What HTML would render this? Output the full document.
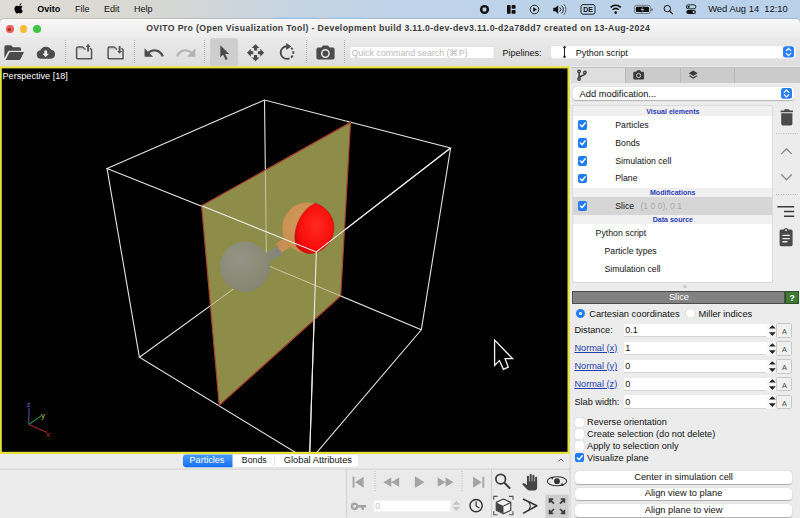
<!DOCTYPE html>
<html><head><meta charset="utf-8">
<style>
*{box-sizing:border-box;margin:0;padding:0}
html,body{width:800px;height:518px;overflow:hidden;background:#ececec;font-family:"Liberation Sans",sans-serif;font-size:9px;color:#111}
.abs{position:absolute}
#menubar{left:0;top:0;width:800px;height:26px;background:linear-gradient(to right,#dcdcd4 0%,#dad9d3 14%,#d3d6d6 24%,#c7d4e1 35%,#bed3e8 50%,#bad1ec 100%)}
#menubar span{position:absolute;top:3px;font-size:9.5px;color:#111}
#titlebar{left:0;top:18.8px;width:799.5px;height:18.6px;background:linear-gradient(#f8f8f8,#ededed);border-radius:4.5px 4.5px 0 0;box-shadow:0 -.7px 0 rgba(0,0,0,.16)}
#title{left:146.2px;top:22.9px;font-size:8.7px;font-weight:bold;color:#3a3a3a;white-space:nowrap;letter-spacing:0.37px}
.tl{position:absolute;top:25.2px;width:7.6px;height:7.6px;border-radius:50%}
#toolbar{left:0;top:37.3px;width:799.5px;height:29px;background:linear-gradient(#ebebeb,#dedede)}
.sep{position:absolute;top:40px;width:0;height:24px;border-left:1px dotted #b5b5b5}
#viewport{left:0;top:66px;width:571px;height:387px;background:#000;border:2px solid #e6e23c}
#vplabel{left:3px;top:70px;color:#fff;font-size:9px}
#right{left:571px;top:66px;width:229px;height:452px;background:#ececec}
#bottom{left:0;top:454.2px;width:571px;height:64px;background:#ececec}
.cb{position:absolute;width:9.5px;height:9.5px;border-radius:2px;background:#1f7cf6}
.cb svg{position:absolute;left:0;top:0}
.ucb{position:absolute;width:9.5px;height:9.5px;border-radius:2.2px;background:#fff;box-shadow:0 0 .8px rgba(0,0,0,.35)}
.t{position:absolute;white-space:nowrap}
.inp{position:absolute;left:622px;width:144px;height:13px;background:#fff;border-bottom:1px solid #d0d0d0;font-size:9px;padding:2px 0 0 3px}
.abtn{position:absolute;left:779px;width:13px;height:13px;background:#fff;border:0.5px solid #d0d0d0;border-radius:2px;font-size:7px;text-align:center;line-height:13px;color:#333}
.btn{position:absolute;left:575px;width:217px;height:13px;background:#fff;border-radius:3px;box-shadow:0 0.5px 1px rgba(0,0,0,.3);text-align:center;font-size:9px;line-height:13px}
.lnk{color:#1a3fb0;text-decoration:underline}
</style></head><body>
<div id="menubar" class="abs"></div>
<div id="titlebar" class="abs"></div>
<div id="toolbar" class="abs"></div>
<svg class="abs" style="left:0;top:0" width="800" height="19" viewBox="0 0 800 19">
<rect x="275" y="17.6" width="42" height="1" fill="#8fc0f0"/><rect x="328" y="17.6" width="36" height="1" fill="#9ac6f0"/>
<!-- apple -->
<g fill="#000">
<path d="M18.6 6.1 c-.9 -.05 -1.7 .5 -2.1 .5 c-.45 0 -1.1 -.48 -1.85 -.46 c-.95 .01 -1.8 .55 -2.3 1.4 c-1 1.7 -.25 4.2 .7 5.6 c.47 .68 1.03 1.44 1.76 1.41 c.7 -.03 .97 -.45 1.82 -.45 c.85 0 1.09 .45 1.84 .44 c.76 -.02 1.24 -.69 1.7 -1.37 c.54 -.78 .76 -1.54 .77 -1.58 c-.02 -.01 -1.47 -.56 -1.49 -2.24 c-.01 -1.4 1.15 -2.07 1.2 -2.1 c-.66 -.96 -1.67 -1.07 -2.03 -1.09 z" transform="translate(3.550 .150) scale(.92)"/>
<path d="M18.9 5.0 c.38 -.47 .64 -1.11 .57 -1.76 c-.55 .02 -1.22 .37 -1.62 .83 c-.35 .41 -.66 1.07 -.58 1.7 c.62 .05 1.25 -.31 1.63 -.77 z" transform="translate(3.550 .150) scale(.92)"/>
</g>
<!-- record -->
<circle cx="484.5" cy="9.5" r="4.6" fill="#111"/><rect x="482.6" y="7.6" width="3.8" height="3.8" rx=".8" fill="#bed3e8"/>
<!-- panels -->
<rect x="507" y="5" width="3.6" height="8.8" rx=".9" fill="#111"/><rect x="511.6" y="5" width="4" height="3.8" rx=".9" fill="#111"/><rect x="511.6" y="9.9" width="4" height="3.9" rx=".9" fill="#111"/>
<!-- play -->
<circle cx="534.5" cy="9.5" r="4.3" fill="none" stroke="#111" stroke-width=".9"/><path d="M533.2 7.3 L536.9 9.5 L533.2 11.7 Z" fill="#111"/>
<!-- speaker -->
<path d="M553.2 7.8 h2 l3 -2.6 v8.6 l-3 -2.6 h-2 z" fill="#111"/>
<g fill="none" stroke="#111" stroke-width=".9" stroke-linecap="round"><path d="M560 7.6 a2.6 2.6 0 0 1 0 3.8"/><path d="M562 5.9 a5 5 0 0 1 0 7.2"/><path d="M564 4.4 a7.2 7.2 0 0 1 0 10.2" stroke="#555"/></g>
<!-- DE -->
<rect x="581" y="4.6" width="14" height="9.6" rx="2" fill="none" stroke="#111" stroke-width=".9"/>
<text x="583.2" y="12.2" font-size="7" font-weight="bold" fill="#111" font-family="Liberation Sans">DE</text>
<!-- wifi -->
<g fill="none" stroke="#111" stroke-width="1.5" stroke-linecap="butt"><path d="M610.6 7.4 a7.4 7.4 0 0 1 10.2 0"/><path d="M612.6 9.8 a4.6 4.6 0 0 1 6.2 0"/></g><circle cx="615.7" cy="12.6" r="1.3" fill="#111"/>
<!-- battery -->
<rect x="634.4" y="5.3" width="16" height="8.2" rx="2.2" fill="none" stroke="#666" stroke-width=".8"/><rect x="635.8" y="6.7" width="13.2" height="5.4" rx="1.2" fill="#111"/><path d="M651.3 8 v3 a1.5 1.5 0 0 0 0 -3z" fill="#666"/>
<path d="M643.2 6.2 l-2.8 3.7 h2 l-.9 3 l2.9 -3.8 h-2 z" fill="#c8d4e4" stroke="#111" stroke-width=".3"/>
<!-- search -->
<circle cx="667.3" cy="8.6" r="3.2" fill="none" stroke="#111" stroke-width="1"/><path d="M669.7 11 L672.6 13.9" stroke="#111" stroke-width="1.1" stroke-linecap="round"/>
<!-- control center -->
<rect x="686.3" y="4.8" width="9.6" height="4" rx="2" fill="none" stroke="#111" stroke-width=".9"/><circle cx="688.6" cy="6.8" r="1.1" fill="#111"/>
<rect x="686.3" y="10" width="9.6" height="4" rx="2" fill="#111"/><circle cx="693.6" cy="12" r="1.1" fill="#c8d4e4"/>
</svg>
<div class="t" style="left:37.2px;top:3.5px;font-size:9px;font-weight:bold;color:#000">Ovito</div>
<div class="t" style="left:75px;top:3.5px;font-size:9px;color:#111">File</div>
<div class="t" style="left:104px;top:3.5px;font-size:9px;color:#111">Edit</div>
<div class="t" style="left:134px;top:3.5px;font-size:9px;color:#111">Help</div>
<div class="t" style="left:708.2px;top:3.2px;font-size:9.4px;color:#111">Wed Aug 14&nbsp; 12:10</div>
<div class="tl" style="left:6px;background:#ec5f57"></div><div class="abs" style="left:8.300px;top:27.500px;width:3px;height:3px;border-radius:50%;background:#9a2a20"></div>
<div class="tl" style="left:19.5px;background:#f6bd3b"></div>
<div class="tl" style="left:33px;background:#3ec544"></div>
<div id="title" class="abs">OVITO Pro (Open Visualization Tool) - Development build 3.11.0-dev-dev3.11.0-d2a78dd7 created on 13-Aug-2024</div>
<svg class="abs" style="left:0;top:38px" width="800" height="28" viewBox="0 38 800 28">
<g stroke="#b4b4b4" stroke-width="1" stroke-dasharray="1 1">
<path d="M65.5 40 V64 M134.5 40 V64 M204.5 40 V64 M306.5 40 V64 M344.5 40 V64"/>
</g>
<rect x="210.1" y="38.3" width="28" height="27.700" rx="2" fill="#cecece"/>
<g fill="#4b4b4b">
<!-- folder open -->
<path d="M4.4 58.3 V46.9 a1.6 1.6 0 0 1 1.6 -1.6 h5 l2 2 h6.4 a1.6 1.6 0 0 1 1.6 1.6 v1.9 H9.6 a2 2 0 0 0 -1.8 1.1 Z"/>
<path d="M5.6 60.1 L9.4 52.6 a1 1 0 0 1 .9 -.5 H24 L20.4 59.3 a1.5 1.5 0 0 1 -1.3 .8 Z"/>
<!-- cloud -->
<path d="M41 58.750 a4.300 4.300 0 0 1 -.600 -8.550 a6 6 0 0 1 10.700 -.5 a4.550 4.550 0 0 1 -.300 9.050 Z"/>
<path d="M44.300 50.500 h2.800 v3.300 h2 l-3.400 3.300 l-3.400 -3.300 h2 z" fill="#ececec"/>
<!-- undo -->
<path transform="translate(142.7 41.7) scale(.94)" d="M12.5 8c-2.65 0-5.05.99-6.9 2.6L2 7v9h9l-3.62-3.62c1.39-1.16 3.16-1.88 5.12-1.88 3.54 0 6.55 2.31 7.6 5.5l2.37-.78C21.08 11.03 17.15 8 12.5 8z"/>
<path transform="translate(174.65 41.7) scale(.94)" fill="#b4b4b4" d="M18.4 10.6C16.55 8.99 14.15 8 11.5 8c-4.65 0-8.58 3.03-9.96 7.22L3.9 16c1.05-3.19 4.05-5.5 7.6-5.5 1.95 0 3.73.72 5.12 1.88L13 16h9V7l-3.6 3.6z"/>
<!-- pointer -->
<path d="M220.3 45.2 L220.3 57.3 L223.2 54.7 L225.6 60.1 L227.6 59.2 L225.2 53.9 L229.2 53.9 Z"/>
<!-- move -->
<path transform="translate(246.2 43.4) scale(.78 .78)" d="M10 9h4V6h3l-5-5-5 5h3v3zm-1 1H6V7l-5 5 5 5v-3h3v-4zm14 2l-5-5v3h-3v4h3v3l5-5zm-9 3h-4v3H7l5 5 5-5h-3v-3z"/>
<!-- camera -->
<path d="M318.2 47.6 h3.1 l1.7 -2 h5 l1.7 2 h3.1 a1.8 1.8 0 0 1 1.8 1.8 v8.4 a1.8 1.8 0 0 1 -1.8 1.8 h-14.6 a1.8 1.8 0 0 1 -1.8 -1.8 v-8.4 a1.8 1.8 0 0 1 1.8 -1.8 z"/>
</g>
<circle cx="325.400" cy="53.500" r="3.700" fill="none" stroke="#e6e6e6" stroke-width="1.500"/>
<!-- export icons -->
<g fill="none" stroke="#555" stroke-width="1.5" stroke-linejoin="round">
<path d="M85.6 49 h-.9 l-2.100 -2.050 h-4.500 a1.500 1.500 0 0 0 -1.500 1.500 v9.400 a1 1 0 0 0 1 1 h13.950 v-8.700 a1.700 1.700 0 0 0 -1.700 -1.700"/>
<path d="M88.100 51.500 V46.500" stroke-width="1.900"/>
<path d="M117.100 49 h-.9 l-2.100 -2.050 h-4.500 a1.500 1.500 0 0 0 -1.500 1.500 v9.400 a1 1 0 0 0 1 1 h13.950 v-8.700 a1.700 1.700 0 0 0 -1.700 -1.700"/>
<path d="M119.600 46 V51.500" stroke-width="1.900"/>
</g>
<path d="M85.700 47.100 L88.100 43.800 L90.500 47.100 Z M117.100 51 L119.600 53.800 L122.100 51 Z" fill="#555"/>
<path d="M77.400 48.900 h7 M108.900 48.900 h7" stroke="#b4b4b4" stroke-width=".8"/>
<g fill="none" stroke="#4b4b4b" stroke-width="1.2">
<!-- rotate -->
<path d="M287 46.300 A6.300 6.300 0 1 0 287 58.900" stroke-width="1.900"/>
<path d="M287 58.900 A6.300 6.300 0 0 0 291.200 47.900" stroke-width="1.900" stroke-dasharray="2.500 1.800"/>
</g>
<path d="M286.200 42.900 L291.400 46.400 L286.200 49.900 Z" fill="#4b4b4b"/>
<!-- search -->
<rect x="350" y="46.5" width="144" height="12" fill="#fff" stroke="#d8d8d8" stroke-width=".6"/>
<text x="351.5" y="55.6" font-size="8.6" fill="#b9b9b9" font-family="Liberation Sans" textLength="116" lengthAdjust="spacingAndGlyphs">Quick command search (&#8984;P)</text>
<text x="502.5" y="56" font-size="9.2" fill="#111" font-family="Liberation Sans" textLength="39" lengthAdjust="spacingAndGlyphs">Pipelines:</text>
<rect x="550.7" y="45.5" width="245" height="13.3" rx="3" fill="#fff" stroke="#d6d6d6" stroke-width=".5"/>
<path d="M564.5 47.5 V56.5" stroke="#222" stroke-width="1"/>
<circle cx="564.5" cy="47.3" r="1.2" fill="#222"/><circle cx="564.5" cy="56.8" r="1.2" fill="#222"/>
<text x="575.7" y="55.6" font-size="9" fill="#111" font-family="Liberation Sans">Python script</text>
<rect x="783" y="46.3" width="11" height="11.3" rx="2.5" fill="#2b7ff2"/>
<path d="M786.2 50.6 L788.5 48.3 L790.8 50.6 M786.2 53.4 L788.5 55.7 L790.8 53.4" fill="none" stroke="#fff" stroke-width="1.1" stroke-linecap="round" stroke-linejoin="round"/>
</svg>
<!--TOOLBAR2-->
<svg class="abs" style="left:0;top:66px" width="570" height="388.2" viewBox="0 66 570 388.2">
<defs>
<radialGradient id="rg" cx="0.55" cy="0.45" r="0.6"><stop offset="0" stop-color="#ff2a22"/><stop offset="0.7" stop-color="#fa0f0c"/><stop offset="1" stop-color="#d80808"/></radialGradient>
<radialGradient id="gg" cx="0.4" cy="0.35" r="0.7"><stop offset="0" stop-color="#959587"/><stop offset="1" stop-color="#84846e"/></radialGradient>
<radialGradient id="og" cx="0.4" cy="0.4" r="0.7"><stop offset="0" stop-color="#d39a5c"/><stop offset="1" stop-color="#c58a4c"/></radialGradient>
<clipPath id="vp"><rect x="2" y="68" width="566" height="384"/></clipPath>
</defs>
<rect x="0" y="66.2" width="569.8" height="388" fill="#e6e13a"/>
<rect x="1.8" y="68.4" width="565.7" height="383.4" fill="#000"/>
<g clip-path="url(#vp)" fill="none" stroke="#e4e4e4" stroke-width="1.1">
<!-- all edges -->
<path d="M107 168.4 L264.5 100 L450.6 148 L316.3 252 Z"/>
<path d="M139.4 357.3 L266.5 265 L421.3 329.8 L309.5 461 Z"/>
<path d="M107 168.4 L139.4 357.3 M264.5 100 L266.5 265 M450.6 148 L421.3 329.8 M316.3 252 L309.5 461"/>
<!-- plane -->
<path d="M201.6 205.8 L350.5 122.4 L340.7 296 L219.2 405.2 Z" fill="#8d8c49" stroke="#a8442e" stroke-width="1.2"/>
<!-- dim lines behind plane -->
<g stroke="#c9c8a0" stroke-width="1">
<path d="M265.350 170.300 L266.500 265"/>
<path d="M340.700 296 L266.500 265 L210.400 305.700"/>
</g>
<!-- spheres -->
<circle cx="245" cy="266.7" r="25.2" fill="url(#gg)" stroke="none"/>
<path d="M266 253 L279 245 L284 253 L271 261 Z" fill="#85857a" stroke="none"/>
<path d="M276 243.5 L288 236 L294 245 L281.5 252.5 Z" fill="#c98f52" stroke="none"/>
<circle cx="307.9" cy="228" r="25.6" fill="url(#og)" stroke="none"/>
<path d="M315.3 203.4 A25.6 25.6 0 0 1 309.3 253.6 C304 253 299 250 296.5 246 C294 240 294.6 232 297.1 225 C300 216 306 207.5 315.3 203.4 Z" fill="url(#rg)" stroke="#b01010" stroke-width="0.6"/>
<!-- front edges -->
<path d="M201.6 205.8 L316.3 252 L450.6 148 M316.3 252 L309.5 461" stroke="#ecece4"/>
</g>
<path d="M494.6 340 V365.4 L499.4 360.6 L503.4 369.4 L508.3 367.2 L505.1 358.7 H512.6 Z" fill="#000" stroke="#f4f4f4" stroke-width="1.3" stroke-linejoin="miter"/>
<!-- tripod -->
<g stroke-width="1" fill="none">
<path d="M28.8 424.5 L29 408" stroke="#5a5aa8"/>
<path d="M28.8 424.5 L41.5 415.5" stroke="#38b838"/>
<path d="M28.8 424.5 L47 432.5" stroke="#b83020"/>
</g>
<text x="26.500" y="407.500" font-size="8" fill="#6a6ac8" font-family="Liberation Sans">z</text>
<text x="41" y="418" font-size="8" fill="#a8c830" font-family="Liberation Sans">y</text>
<text x="46" y="437" font-size="8" fill="#c83828" font-family="Liberation Sans">x</text>
<text x="2.5" y="78.7" font-size="9.2" fill="#fff" font-family="Liberation Sans" textLength="65.4" lengthAdjust="spacingAndGlyphs">Perspective [18]</text>
</svg>
<div id="right" class="abs"></div>
<div class="abs" style="left:570.5px;top:67px;width:229.5px;height:16px;background:#cbcbcb;border-top:1px solid #c2c2c2"></div>
<div class="abs" style="left:570.5px;top:67.5px;width:54px;height:15.5px;background:#dedede"></div>
<div class="abs" style="left:624.5px;top:68px;width:1px;height:15px;background:#b8b8b8"></div>
<div class="abs" style="left:679.5px;top:68px;width:1px;height:15px;background:#b8b8b8"></div>
<div class="abs" style="left:734px;top:68px;width:1px;height:15px;background:#b8b8b8"></div>
<svg class="abs" style="left:570px;top:67px" width="230" height="16" viewBox="570 67 230 16">
<g fill="none" stroke="#3a3a3a" stroke-width="1.5"><path d="M579.1 72.4 V78 M584.9 73.6 c0 2.8 -5.8 1.6 -5.8 4.6"/></g>
<g fill="#3a3a3a"><circle cx="579.1" cy="71.3" r="1.9"/><circle cx="579.1" cy="79" r="1.9"/><circle cx="584.9" cy="72.5" r="1.9"/></g>
<g fill="#dedede"><circle cx="579.1" cy="71.3" r=".6"/><circle cx="579.1" cy="79" r=".6"/><circle cx="584.9" cy="72.5" r=".6"/></g>
<path d="M634.3 71.8 h1.9 l1 -1.5 h2.9 l1 1.500 h1.9 a1 1 0 0 1 1 1 v5.600 a1 1 0 0 1 -1 1 h-8.700 a1 1 0 0 1 -1 -1 v-5.600 a1 1 0 0 1 1 -1 z" fill="#3a3a3a"/><circle cx="638.6" cy="75.5" r="2.1" fill="none" stroke="#cbcbcb" stroke-width="1"/>
<path d="M693.200 70.500 L697.600 73.300 L693.200 76.100 L688.800 73.300 Z" fill="#3a3a3a"/><path d="M689.500 75.700 L693.200 78.100 L696.900 75.700" fill="none" stroke="#3a3a3a" stroke-width="1.200"/>
</svg>
<div class="abs" style="left:573.2px;top:86.6px;width:220.4px;height:13.3px;background:#fff;border-radius:3px;box-shadow:0 .5px 1px rgba(0,0,0,.25)"></div>
<div class="t" style="left:579.6px;top:88.73px;font-size:9.3px;color:#111;">Add modification...</div>
<svg class="abs" style="left:781px;top:88px" width="11" height="11" viewBox="0 0 11 11"><rect width="11" height="10.8" rx="2.5" fill="#2b7ff2"/><path d="M3.2 4.3 L5.5 2 L7.8 4.3 M3.2 6.7 L5.5 9 L7.8 6.7" fill="none" stroke="#fff" stroke-width="1.1" stroke-linecap="round" stroke-linejoin="round"/></svg>
<div class="abs" style="left:572.4px;top:105.3px;width:200.2px;height:178px;background:#fff;border:0.5px solid #dcdcdc"></div>
<div class="abs" style="left:573px;top:105.8px;width:199px;height:9.8px;background:#f0f0f0"></div><div class="t" style="left:646.3px;top:107.60px;font-size:7.05px;color:#2a3db8;font-weight:bold;">Visual elements</div>
<div class="abs" style="left:573px;top:187.6px;width:199px;height:9.2px;background:#f0f0f0"></div><div class="t" style="left:650.0px;top:188.80px;font-size:7.05px;color:#2a3db8;font-weight:bold;">Modifications</div>
<div class="abs" style="left:573px;top:197px;width:199px;height:17.8px;background:#d6d6d6"></div>
<div class="abs" style="left:573px;top:214.8px;width:199px;height:9.2px;background:#f0f0f0"></div><div class="t" style="left:652.7px;top:216.00px;font-size:7.05px;color:#2a3db8;font-weight:bold;">Data source</div>
<div class="cb" style="left:577.5px;top:120.0px"><svg width="9.4" height="9.4" viewBox="0 0 10 10"><path d="M2.4 5.2 L4.3 7.2 L7.7 2.9" fill="none" stroke="#fff" stroke-width="1.5" stroke-linecap="round" stroke-linejoin="round"/></svg></div>
<div class="t" style="left:615.3px;top:119.78px;font-size:8.7px;color:#111;">Particles</div>
<div class="cb" style="left:577.5px;top:138.0px"><svg width="9.4" height="9.4" viewBox="0 0 10 10"><path d="M2.4 5.2 L4.3 7.2 L7.7 2.9" fill="none" stroke="#fff" stroke-width="1.5" stroke-linecap="round" stroke-linejoin="round"/></svg></div>
<div class="t" style="left:615.3px;top:137.78px;font-size:8.7px;color:#111;">Bonds</div>
<div class="cb" style="left:577.5px;top:156.0px"><svg width="9.4" height="9.4" viewBox="0 0 10 10"><path d="M2.4 5.2 L4.3 7.2 L7.7 2.9" fill="none" stroke="#fff" stroke-width="1.5" stroke-linecap="round" stroke-linejoin="round"/></svg></div>
<div class="t" style="left:615.3px;top:155.78px;font-size:8.7px;color:#111;">Simulation cell</div>
<div class="cb" style="left:577.5px;top:173.7px"><svg width="9.4" height="9.4" viewBox="0 0 10 10"><path d="M2.4 5.2 L4.3 7.2 L7.7 2.9" fill="none" stroke="#fff" stroke-width="1.5" stroke-linecap="round" stroke-linejoin="round"/></svg></div>
<div class="t" style="left:615.3px;top:173.48px;font-size:8.7px;color:#111;">Plane</div>
<div class="cb" style="left:577.5px;top:201.2px"><svg width="9.4" height="9.4" viewBox="0 0 10 10"><path d="M2.4 5.2 L4.3 7.2 L7.7 2.9" fill="none" stroke="#fff" stroke-width="1.5" stroke-linecap="round" stroke-linejoin="round"/></svg></div>
<div class="t" style="left:615.3px;top:200.98px;font-size:8.7px;color:#111;">Slice</div>
<div class="t" style="left:640.5px;top:201.08px;font-size:8.6px;color:#a9a9a9;">(1 0 0), 0.1</div>
<div class="t" style="left:595.6px;top:228.04px;font-size:8.75px;color:#111;">Python script</div>
<div class="t" style="left:604.5px;top:246.08px;font-size:8.7px;color:#111;">Particle types</div>
<div class="t" style="left:604.5px;top:263.78px;font-size:8.7px;color:#111;">Simulation cell</div>
<svg class="abs" style="left:772px;top:100px" width="28" height="190" viewBox="772 100 28 190">
<g fill="#4a4a4a"><path d="M781.2 113.2 h11.2 v10.6 a1.7 1.7 0 0 1 -1.7 1.7 h-7.8 a1.7 1.7 0 0 1 -1.7 -1.7 z"/><path d="M780.6 110.4 h3.3 l.9 -1.2 h4 l.9 1.2 h3.3 v1.9 h-12.4 z"/>
<path d="M779.6 231.2 a1.6 1.6 0 0 1 1.6 -1.6 h2.6 a2.4 2.4 0 0 1 4.6 0 h2.6 a1.6 1.6 0 0 1 1.6 1.6 v13.4 a1.6 1.6 0 0 1 -1.6 1.6 h-9.8 a1.6 1.6 0 0 1 -1.6 -1.6 z"/></g>
<circle cx="786.1" cy="230.2" r=".9" fill="#ececec"/>
<g stroke="#ececec" stroke-width="1.4"><path d="M782.4 235.4 h7.4 M782.4 238.6 h7.4 M782.4 241.8 h5"/></g>
<g stroke="#b4b4b4" stroke-width="1" stroke-dasharray="1 1.4"><path d="M776 133.6 h22 M776 194.5 h22"/></g>
<g fill="none" stroke="#8a8a8a" stroke-width="1.3" stroke-linecap="round" stroke-linejoin="round"><path d="M781.6 153.6 L786.5 148.7 L791.4 153.6"/><path d="M781.6 174.8 L786.5 179.7 L791.4 174.8"/></g>
<g stroke="#3a3a3a" stroke-width="1.5"><path d="M777.4 206.7 h16.8 M784 211.4 h10.2 M784 216.2 h10.2"/></g>
</svg>
<div class="abs" style="left:683.4px;top:284.8px;width:3.2px;height:3.2px;border-radius:50%;background:#cdcdcd"></div>
<div class="abs" style="left:572.3px;top:290.6px;width:213px;height:13.5px;background:#828282;border:1px solid #4c4c4c"></div>
<div class="t" style="left:668.9px;top:292.03px;font-size:9.3px;color:#fff;">Slice</div>
<div class="abs" style="left:785.3px;top:290.6px;width:13.7px;height:13.5px;background:#3f7a35;border:1px solid #2c5226"></div>
<div class="t" style="left:789.5px;top:292.88px;font-size:8.6px;color:#fff;font-weight:bold;">?</div>
<div class="abs" style="left:575.9px;top:309px;width:9.2px;height:9.2px;border-radius:50%;background:#1f7cf6"></div><div class="abs" style="left:578.8px;top:311.9px;width:3.4px;height:3.4px;border-radius:50%;background:#fff"></div>
<div class="t" style="left:589.2px;top:308.53px;font-size:9.3px;color:#111;">Cartesian coordinates</div>
<div class="abs" style="left:686.1px;top:309px;width:9.2px;height:9.2px;border-radius:50%;background:#fff;box-shadow:0 0 0 .5px #cfcfcf"></div>
<div class="t" style="left:698.5px;top:308.53px;font-size:9.3px;color:#111;">Miller indices</div>
<div class="abs" style="left:623.7px;top:323.8px;width:142px;height:13.3px;background:#fff;border-bottom:1px solid #d4d4d4"></div>
<div class="abs" style="left:765.7px;top:323.8px;width:10.3px;height:13.3px;background:linear-gradient(to right,#fbfbfb,#f1f1f1)"></div>
<div class="t" style="left:574.4px;top:324.92px;font-size:9.2px;color:#111;">Distance:</div>
<div class="t" style="left:625.2px;top:325.11px;font-size:9px;color:#111;">0.1</div>
<svg class="abs" style="left:767.5px;top:323.8px" width="9" height="14" viewBox="0 0 9 14"><path d="M.9 4.5 L4.3 1.2 L7.7 4.5 Z M.9 8.3 L4.3 12 L7.7 8.3 Z" fill="#222"/></svg>
<div class="abs" style="left:776.4px;top:323.3px;width:15.8px;height:14.4px;background:#f1f1f1;border:.8px solid #c8c8c8;border-radius:1.5px"></div>
<div class="t" style="left:782.1px;top:327.17px;font-size:7.2px;color:#444;">A</div>
<div class="abs" style="left:623.7px;top:341.7px;width:142px;height:13.3px;background:#fff;border-bottom:1px solid #d4d4d4"></div>
<div class="abs" style="left:765.7px;top:341.7px;width:10.3px;height:13.3px;background:linear-gradient(to right,#fbfbfb,#f1f1f1)"></div>
<div class="t" style="left:574.4px;top:342.82px;font-size:9.2px;color:#1f3fae;text-decoration:underline;">Normal (x)</div>
<div class="t" style="left:625.2px;top:343.01px;font-size:9px;color:#111;">1</div>
<svg class="abs" style="left:767.5px;top:341.7px" width="9" height="14" viewBox="0 0 9 14"><path d="M.9 4.5 L4.3 1.2 L7.7 4.5 Z M.9 8.3 L4.3 12 L7.7 8.3 Z" fill="#222"/></svg>
<div class="abs" style="left:776.4px;top:341.2px;width:15.8px;height:14.4px;background:#f1f1f1;border:.8px solid #c8c8c8;border-radius:1.5px"></div>
<div class="t" style="left:782.1px;top:345.07px;font-size:7.2px;color:#444;">A</div>
<div class="abs" style="left:623.7px;top:359.8px;width:142px;height:13.3px;background:#fff;border-bottom:1px solid #d4d4d4"></div>
<div class="abs" style="left:765.7px;top:359.8px;width:10.3px;height:13.3px;background:linear-gradient(to right,#fbfbfb,#f1f1f1)"></div>
<div class="t" style="left:574.4px;top:360.92px;font-size:9.2px;color:#1f3fae;text-decoration:underline;">Normal (y)</div>
<div class="t" style="left:625.2px;top:361.11px;font-size:9px;color:#111;">0</div>
<svg class="abs" style="left:767.5px;top:359.8px" width="9" height="14" viewBox="0 0 9 14"><path d="M.9 4.5 L4.3 1.2 L7.7 4.5 Z M.9 8.3 L4.3 12 L7.7 8.3 Z" fill="#222"/></svg>
<div class="abs" style="left:776.4px;top:359.3px;width:15.8px;height:14.4px;background:#f1f1f1;border:.8px solid #c8c8c8;border-radius:1.5px"></div>
<div class="t" style="left:782.1px;top:363.17px;font-size:7.2px;color:#444;">A</div>
<div class="abs" style="left:623.7px;top:377.6px;width:142px;height:13.3px;background:#fff;border-bottom:1px solid #d4d4d4"></div>
<div class="abs" style="left:765.7px;top:377.6px;width:10.3px;height:13.3px;background:linear-gradient(to right,#fbfbfb,#f1f1f1)"></div>
<div class="t" style="left:574.4px;top:378.72px;font-size:9.2px;color:#1f3fae;text-decoration:underline;">Normal (z)</div>
<div class="t" style="left:625.2px;top:378.91px;font-size:9px;color:#111;">0</div>
<svg class="abs" style="left:767.5px;top:377.6px" width="9" height="14" viewBox="0 0 9 14"><path d="M.9 4.5 L4.3 1.2 L7.7 4.5 Z M.9 8.3 L4.3 12 L7.7 8.3 Z" fill="#222"/></svg>
<div class="abs" style="left:776.4px;top:377.1px;width:15.8px;height:14.4px;background:#f1f1f1;border:.8px solid #c8c8c8;border-radius:1.5px"></div>
<div class="t" style="left:782.1px;top:380.97px;font-size:7.2px;color:#444;">A</div>
<div class="abs" style="left:623.7px;top:395.4px;width:142px;height:13.3px;background:#fff;border-bottom:1px solid #d4d4d4"></div>
<div class="abs" style="left:765.7px;top:395.4px;width:10.3px;height:13.3px;background:linear-gradient(to right,#fbfbfb,#f1f1f1)"></div>
<div class="t" style="left:574.4px;top:396.52px;font-size:9.2px;color:#111;">Slab width:</div>
<div class="t" style="left:625.2px;top:396.71px;font-size:9px;color:#111;">0</div>
<svg class="abs" style="left:767.5px;top:395.4px" width="9" height="14" viewBox="0 0 9 14"><path d="M.9 4.5 L4.3 1.2 L7.7 4.5 Z M.9 8.3 L4.3 12 L7.7 8.3 Z" fill="#222"/></svg>
<div class="abs" style="left:776.4px;top:394.9px;width:15.8px;height:14.4px;background:#f1f1f1;border:.8px solid #c8c8c8;border-radius:1.5px"></div>
<div class="t" style="left:782.1px;top:398.77px;font-size:7.2px;color:#444;">A</div>
<div class="ucb" style="left:574.7px;top:417.6px"></div>
<div class="t" style="left:587.1px;top:417.42px;font-size:9.2px;color:#111;">Reverse orientation</div>
<div class="ucb" style="left:574.7px;top:429.3px"></div>
<div class="t" style="left:587.1px;top:429.12px;font-size:9.2px;color:#111;">Create selection (do not delete)</div>
<div class="ucb" style="left:574.7px;top:441.1px"></div>
<div class="t" style="left:587.1px;top:440.92px;font-size:9.2px;color:#111;">Apply to selection only</div>
<div class="cb" style="left:574.7px;top:452.7px"><svg width="9.4" height="9.4" viewBox="0 0 10 10"><path d="M2.4 5.2 L4.3 7.2 L7.7 2.9" fill="none" stroke="#fff" stroke-width="1.5" stroke-linecap="round" stroke-linejoin="round"/></svg></div>
<div class="t" style="left:587.1px;top:452.52px;font-size:9.2px;color:#111;">Visualize plane</div>
<div class="abs" style="left:575.3px;top:471.1px;width:216.6px;height:12.8px;background:#fff;border-radius:3.5px;box-shadow:0 .5px 1px rgba(0,0,0,.28)"></div>
<div class="t" style="left:575.3px;width:216.6px;text-align:center;top:471.73px;font-size:9.3px;color:#111">Center in simulation cell</div>
<div class="abs" style="left:575.3px;top:487.7px;width:216.6px;height:12.8px;background:#fff;border-radius:3.5px;box-shadow:0 .5px 1px rgba(0,0,0,.28)"></div>
<div class="t" style="left:575.3px;width:216.6px;text-align:center;top:488.33px;font-size:9.3px;color:#111">Align view to plane</div>
<div class="abs" style="left:575.3px;top:504.2px;width:216.6px;height:12.8px;background:#fff;border-radius:3.5px;box-shadow:0 .5px 1px rgba(0,0,0,.28)"></div>
<div class="t" style="left:575.3px;width:216.6px;text-align:center;top:504.83px;font-size:9.3px;color:#111">Align plane to view</div>
<!--RIGHTEND-->
<div id="bottom" class="abs"></div>
<svg class="abs" style="left:0;top:454.2px" width="571" height="63.8" viewBox="0 454.2 571 63.8">
<defs><linearGradient id="bl" x1="0" y1="0" x2="0" y2="1"><stop offset="0" stop-color="#4a9dfb"/><stop offset="1" stop-color="#176ff0"/></linearGradient></defs>
<rect x="346.6" y="469.7" width="224" height="49" fill="#eaeaea"/>
<path d="M0 469.3 H570.5" stroke="#d2d2d2" stroke-width="1"/>
<path d="M346.4 469.3 V518 M491.5 469.3 V518" stroke="#d0d0d0" stroke-width="1"/><path d="M570.2 454.2 V518" stroke="#d2d2d2" stroke-width="1"/>
<path d="M558.3 461.6 L561 459.2 L563.7 461.6" fill="none" stroke="#5a5a5a" stroke-width="1" />
<!-- segmented -->
<rect x="183" y="454.6" width="175.8" height="12.9" rx="3.2" fill="#fff" stroke="#d9d9d9" stroke-width=".5"/>
<path d="M186.2 454.6 H232.5 V467.5 H186.2 A3.2 3.2 0 0 1 183 464.3 V457.8 A3.2 3.2 0 0 1 186.2 454.6 Z" fill="url(#bl)"/>
<path d="M274.6 456.5 V465.6" stroke="#dcdcdc" stroke-width=".8"/>
<g font-family="Liberation Sans" font-size="9.2">
<text x="189.6" y="463.6" fill="#fff" textLength="34.6" lengthAdjust="spacingAndGlyphs">Particles</text>
<text x="241.8" y="463.6" fill="#111" textLength="24.9" lengthAdjust="spacingAndGlyphs">Bonds</text>
<text x="283.8" y="463.6" fill="#111" textLength="68.2" lengthAdjust="spacingAndGlyphs">Global Attributes</text>
</g>
<!-- anim controls -->
<g fill="#a4a4a4">
<rect x="352.6" y="476.9" width="1.9" height="11"/><path d="M363.6 476.9 V487.9 L355 482.4 Z"/>
<path d="M391.3 477.8 V487 L383.4 482.4 Z M399.2 477.8 V487 L391.3 482.4 Z"/>
<path d="M414.9 476.5 L424.5 482.4 L414.9 488.3 Z"/>
<path d="M437.7 477.8 L445.6 482.4 L437.7 487 Z M445.6 477.8 L453.5 482.4 L445.6 487 Z"/>
<path d="M473.1 476.9 L481.7 482.4 L473.1 487.9 Z"/><rect x="482.4" y="476.9" width="1.9" height="11"/>
<!-- key -->
<path d="M354.6 502.6 a3.9 3.9 0 1 0 3.7 5.1 h3.2 v2.5 h2.4 v-2.5 h2.3 v-2.4 h-7.9 a3.9 3.9 0 0 0 -3.7 -2.7 z M354.6 505 a1.5 1.5 0 1 1 0 3 a1.5 1.5 0 0 1 0 -3 z" fill-rule="evenodd"/>
</g>
<g stroke="#b8b8b8" stroke-width="1" stroke-dasharray="1 1.4"><path d="M375 471 V492.6 M462 471 V492.6"/></g>
<!-- spin -->
<rect x="374.1" y="500.8" width="76.3" height="10.8" fill="#fff"/>
<text x="375.2" y="509.6" font-family="Liberation Sans" font-size="8.6" fill="#c4c4c4">0</text>
<path d="M452.6 505 L456.4 500.9 L460.2 505 Z M452.6 507.2 L456.4 511.3 L460.2 507.2 Z" fill="#c4c4c4"/>
<!-- clock -->
<circle cx="476.1" cy="505.8" r="6.1" fill="none" stroke="#333" stroke-width="1.4"/><path d="M476.1 501.6 V506.2 L479.4 508.2" fill="none" stroke="#333" stroke-width="1.2"/>
<!-- magnifier -->
<circle cx="500.7" cy="479.3" r="4.8" fill="none" stroke="#3a3a3a" stroke-width="1.7"/><path d="M504.4 483 L510.2 488.8" stroke="#3a3a3a" stroke-width="2"/>
<!-- hand -->
<path transform="translate(521.5 474.2) scale(.68 .69)" d="M23 5.5V20c0 2.2-1.8 4-4 4h-7.3c-1.08 0-2.1-.43-2.850-1.190L1 14.830s1.260-1.230 1.300-1.250c.22-.19.49-.29.79-.29.22 0 .42.060.6.160.4.010 4.310 2.460 4.310 2.460V4c0-.83.67-1.500 1.500-1.500S11 3.170 11 4v7h1V1.500c0-.83.67-1.500 1.500-1.500S15 .67 15 1.500V11h1V2.500c0-.83.67-1.500 1.500-1.500s1.500.67 1.500 1.500V11h1V5.500c0-.83.67-1.500 1.500-1.500s1.500.67 1.500 1.500z" fill="#444"/>
<!-- eye -->
<ellipse cx="557" cy="481.5" rx="9.7" ry="4.5" fill="none" stroke="#333" stroke-width="1.1"/><circle cx="557" cy="481.4" r="2.9" fill="#333"/>
<path d="M550.6 476.9 l3.300 .5 l-1.700 2.600 z M563.600 486.100 l-3.300 -.5 l1.700 -2.600 z" fill="#333"/>
<!-- cube -->
<g fill="none" stroke="#555" stroke-width="1.1"><path d="M493.7 500 V496.6 H497.6 M509 496.6 H513 V500 M513 511.4 V515 H509 M497.6 515 H493.7 V511.4"/></g>
<path d="M503.5 499.2 L510.8 502.6 V510.4 L503.5 514 L496.3 510.4 V502.6 Z" fill="#f4f4f4" stroke="#444" stroke-width="1.2" stroke-linejoin="round"/>
<path d="M496.3 502.6 L503.5 506.2 V514 L496.3 510.4 Z" fill="#444"/>
<path d="M503.5 506.2 L510.8 502.6" stroke="#444" stroke-width="1.1"/>
<!-- fov -->
<path d="M523 499.2 L536.8 506 L523 513.6" fill="none" stroke="#333" stroke-width="1.6" stroke-linejoin="round"/><path d="M528.6 502.2 a6.5 6.5 0 0 1 .2 8" fill="none" stroke="#333" stroke-width="1.1"/>
<!-- maximize -->
<rect x="545.4" y="494.8" width="23.3" height="23.4" fill="#cecece"/>
<g fill="none" stroke="#3c3c3c" stroke-width="1.7"><path d="M549.6 503 V499.4 H553.2 M550 499.8 L554 503.8 M560.8 499.4 H564.4 V503 M564 499.8 L560 503.8 M564.4 510 V513.6 H560.8 M564 513.2 L560 509.2 M553.2 513.6 H549.6 V510 M550 513.2 L554 509.2"/></g>
</svg>
</body></html>
